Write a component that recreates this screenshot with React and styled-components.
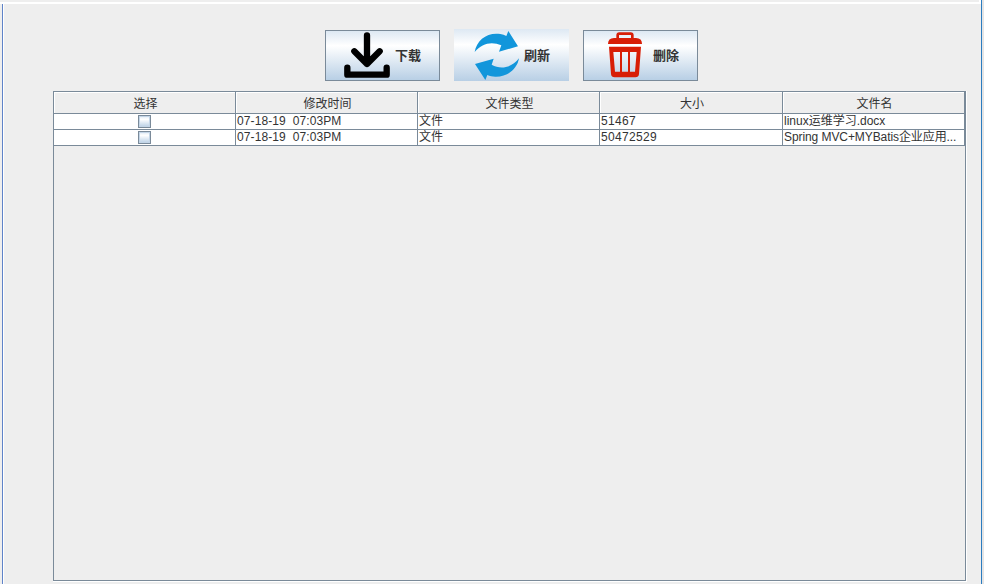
import React from "react";
import styled, { createGlobalStyle } from "styled-components";

const GlobalStyle = createGlobalStyle`
  * { box-sizing: border-box; }
  body { margin: 0; background: #eee; overflow: hidden; }
`;

const Window = styled.div`
  width: 984px;
  height: 584px;
  display: flex;
  flex-direction: column;
  background: #eee;
  color: #333;
  font: 12px "Liberation Sans", "Noto Sans CJK SC", sans-serif;
`;

const TopEdge = styled.div`
  height: 4px;
  flex: none;
  margin-right: 3px;
  border-bottom: 2px solid #fff;
  border-right: 2px solid #fff;
`;

const Body = styled.div`
  flex: 1;
  min-height: 0;
  margin-left: 2px;
  display: flex;
  border-left: 1px solid #5f83c8;
`;

const Panel = styled.main`
  flex: 1;
  min-width: 0;
  border-left: 1px solid #fff;
  display: flex;
  flex-direction: column;
  padding: 25px 14px 0 49px;
`;

const RightEdge = styled.div`
  width: 3px;
  flex: none;
  margin-top: -4px;
  border-left: 1px solid #2b7cc0;
  background: #e4e4e4;
`;

const Toolbar = styled.div`
  height: 52px;
  display: flex;
  gap: 14px;
  margin-left: 272px;
`;

const ToolButton = styled.button`
  width: 115px;
  height: ${(p) => (p.$flat ? 52 : 51)}px;
  margin: ${(p) => (p.$flat ? 0 : "1px 0 0")};
  padding: 0 0 0 ${(p) => (p.$flat ? 18 : 17)}px;
  border: ${(p) => (p.$flat ? "none" : "1px solid #7a8a99")};
  border-radius: 0;
  background: linear-gradient(#dde8f3 0%, #fff 30%, #b8cfe5 100%);
  display: flex;
  align-items: center;
  gap: 4px;
  color: #333;
  font: bold 13px "Noto Sans CJK SC", sans-serif;
  white-space: nowrap;
`;

const ButtonLabel = styled.span`
  padding-bottom: 2px;
`;

const Icon = styled.svg`
  width: 48px;
  height: 49px;
  flex: none;
`;

const Table = styled.section`
  width: 914px;
  height: 491px;
  margin-top: 10px;
  border-right: 1px solid #fff;
  border-bottom: 1px solid #fff;
`;

const TableFrame = styled.div`
  width: 913px;
  height: 490px;
  border: 1px solid #7a8a99;
`;

const Row = styled.div`
  display: grid;
  grid-template-columns: 182px 182px 182px 183px 182px;
  height: 16px;
  background: #fff;
`;

const HeaderRow = styled(Row)`
  height: 22px;
  background: #eee;
`;

const HeaderCell = styled.div`
  height: 22px;
  border: solid #7a8a99;
  border-width: 0 1px 1px 0;
  box-shadow: inset 1px 1px #fff;
  display: flex;
  align-items: center;
  justify-content: center;
  padding: 3px 0 0 2px;
  line-height: 18px;
`;

const Cell = styled.div`
  border: solid #7a8a99;
  border-width: 0 1px 1px 0;
  padding-left: 1px;
  line-height: 15px;
  height: 16px;
  white-space: pre;
  overflow: hidden;
  letter-spacing: ${(p) => p.$tracking || 0}px;
`;

const CheckCell = styled(Cell)`
  display: flex;
  justify-content: center;
  padding: 1px 0 0;
`;

const Checkbox = styled.span`
  width: 13px;
  height: 13px;
  border: 1px solid #7a8a99;
  background: linear-gradient(#dde8f3 0%, #fff 30%, #b8cfe5 100%);
  box-shadow: inset 0 0 0 1px #c3d5e7;
`;

const DownloadIcon = () => (
  <Icon viewBox="69 21 144 147" fill="none" stroke="#000" strokeWidth="19" strokeLinecap="round" strokeLinejoin="round">
    <path d="M141 34V119M103 82L141 120L179 82" />
    <path d="M82 131V152H200V131" />
  </Icon>
);

const RefreshIcon = () => (
  <Icon viewBox="66 21 144 147" fill="#1296db">
    <path d="M74 84C80 48 112 24 151 30C158 31 164 33 169 36L175 21L204 67L147 83L154 64C126 51 96 57 74 84Z" />
    <path d="M207 103C202 134 174 159 136 158C127 158 119 156 112 153L106 168L75 120L131 104L125 122C153 138 187 130 207 103Z" />
  </Icon>
);

const TrashIcon = () => (
  <Icon viewBox="69 21 144 147" fill="#d81e06">
    <path d="M119 44V34Q119 29 124 29H158Q163 29 163 34V44" fill="none" stroke="#d81e06" strokeWidth="8" />
    <path d="M90 60Q90 42 108 42H174Q192 42 192 60Z" />
    <path fillRule="evenodd" d="M93 68H189L183 150Q182 160 172 160H110Q100 160 99 150ZM106 84L111 143H126V84ZM132 84V143H150V84ZM156 84V143H171L176 84Z" />
  </Icon>
);

const columns = ["选择", "修改时间", "文件类型", "大小", "文件名"];

const files = [
  { time: "07-18-19  07:03PM", type: "文件", size: "51467", name: "linux运维学习.docx" },
  { time: "07-18-19  07:03PM", type: "文件", size: "50472529", name: "Spring MVC+MYBatis企业应用...", tracking: -0.08 },
];

export default function App() {
  return (
    <Window>
      <GlobalStyle />
      <TopEdge />
      <Body>
        <Panel>
          <Toolbar>
            <ToolButton><DownloadIcon /><ButtonLabel>下载</ButtonLabel></ToolButton>
            <ToolButton $flat><RefreshIcon /><ButtonLabel>刷新</ButtonLabel></ToolButton>
            <ToolButton><TrashIcon /><ButtonLabel>删除</ButtonLabel></ToolButton>
          </Toolbar>
          <Table>
            <TableFrame>
              <HeaderRow>
                {columns.map((c) => <HeaderCell key={c}>{c}</HeaderCell>)}
              </HeaderRow>
              {files.map((f) => (
                <Row key={f.name}>
                  <CheckCell><Checkbox /></CheckCell>
                  <Cell $tracking={0.1}>{f.time}</Cell>
                  <Cell>{f.type}</Cell>
                  <Cell $tracking={0.33}>{f.size}</Cell>
                  <Cell $tracking={f.tracking}>{f.name}</Cell>
                </Row>
              ))}
            </TableFrame>
          </Table>
        </Panel>
        <RightEdge />
      </Body>
    </Window>
  );
}
